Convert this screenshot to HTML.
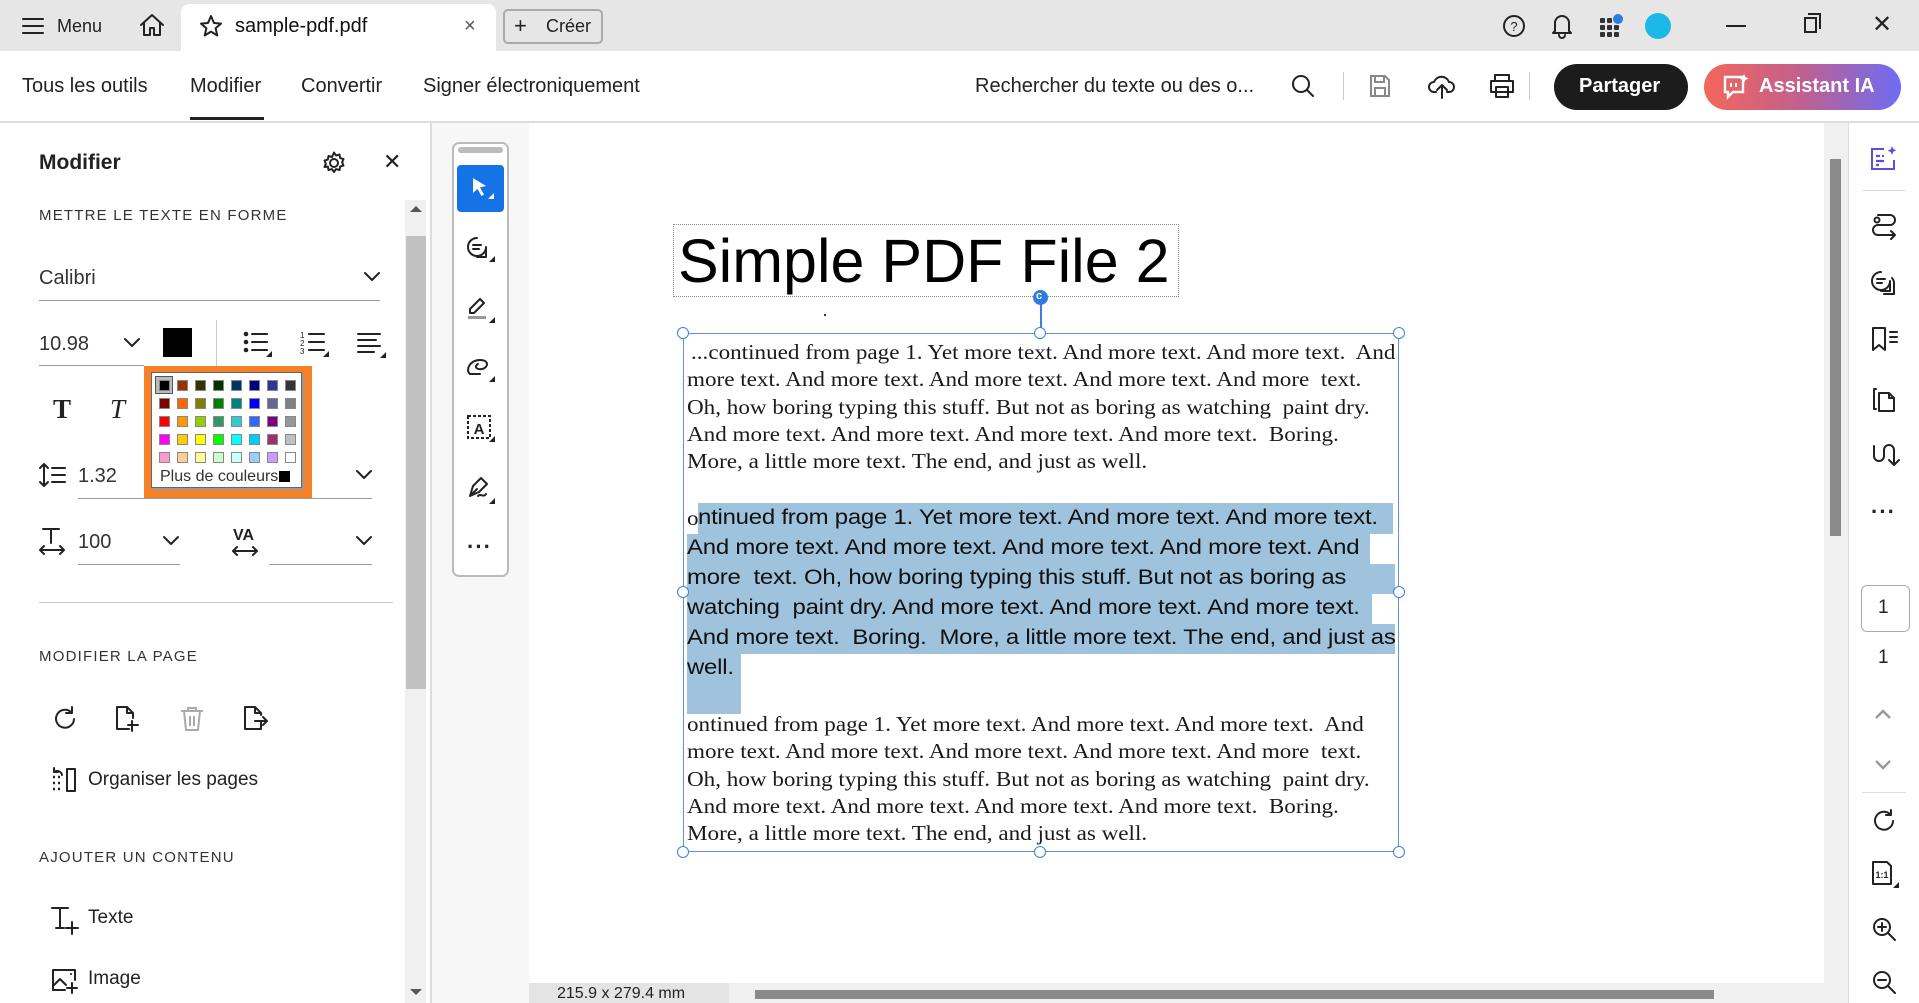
<!DOCTYPE html>
<html><head><meta charset="utf-8"><style>
*{margin:0;padding:0;box-sizing:border-box}
body{width:1919px;height:1003px;overflow:hidden;background:#fff;font-family:"Liberation Sans",sans-serif;color:#222;position:relative}
.a{position:absolute}
.t{position:absolute;white-space:nowrap;line-height:1}
svg{position:absolute;overflow:visible}
.ic{fill:none;stroke:#222;stroke-width:2;stroke-linecap:round;stroke-linejoin:round}
.ser{font-family:"Liberation Serif",serif;font-size:21px;color:#1a1a1a;transform:scaleX(1.1);transform-origin:0 0}
.san{font-family:"Liberation Sans",sans-serif;font-size:21px;color:#111;letter-spacing:-0.2px;transform:scaleX(1.14);transform-origin:0 0}
.hl{background:#9fc3dd}
.h{position:absolute;width:12px;height:12px;border:1.5px solid #3d7fd6;border-radius:50%;background:#fff}
.sw{position:absolute;width:11px;height:11px;border:1px solid #888}
.cap{font-size:15px;letter-spacing:1.2px;color:#333}
</style></head><body>

<!-- top bar -->
<div class="a" style="left:0;top:0;width:1919px;height:51px;background:#e6e6e6"></div>
<svg style="left:22px;top:17px" width="22" height="18"><path class="ic" d="M1 2h20M1 9h20M1 16h20"/></svg>
<div class="t" style="left:57px;top:17px;font-size:18px">Menu</div>
<svg style="left:139px;top:13px" width="26" height="24"><path class="ic" d="M2 12L13 2l11 10M5 10v12h6v-7h4v7h6V10"/></svg>
<div class="a" style="left:181px;top:4px;width:315px;height:47px;background:#fff;border-radius:8px 8px 0 0"></div>
<svg style="left:199px;top:14px" width="24" height="24"><path class="ic" d="M12 2l3 7 7 .6-5.4 4.6 1.7 7.3L12 17.6 5.7 21.5l1.7-7.3L2 9.6 9 9z"/></svg>
<div class="t" style="left:235px;top:16px;font-size:20px;color:#111">sample-pdf.pdf</div>
<div class="t" style="left:464px;top:16px;font-size:20px;color:#555">×</div>
<div class="a" style="left:503px;top:9px;width:100px;height:35px;border:2px solid #aaa;border-radius:5px"></div>
<div class="t" style="left:514px;top:15px;font-size:22px">+</div>
<div class="t" style="left:546px;top:17px;font-size:18px">Créer</div>
<svg style="left:1502px;top:14px" width="24" height="24"><circle class="ic" cx="12" cy="12" r="10"/><text x="12" y="17" font-size="13" text-anchor="middle" font-family="Liberation Sans" fill="#222">?</text></svg>
<svg style="left:1551px;top:13px" width="22" height="26"><path class="ic" d="M4 18V10a7 7 0 0114 0v8l2 2H2zM8 22a3 3 0 006 0"/></svg>
<svg style="left:1600px;top:14px" width="24" height="24"><g fill="#333"><rect x="0" y="4" width="5" height="5" rx="1"/><rect x="7" y="4" width="5" height="5" rx="1"/><rect x="0" y="11" width="5" height="5" rx="1"/><rect x="7" y="11" width="5" height="5" rx="1"/><rect x="14" y="11" width="5" height="5" rx="1"/><rect x="0" y="18" width="5" height="5" rx="1"/><rect x="7" y="18" width="5" height="5" rx="1"/><rect x="14" y="18" width="5" height="5" rx="1"/></g><circle cx="18" cy="5" r="5" fill="#2a7de1"/></svg>
<div class="a" style="left:1645px;top:13px;width:26px;height:26px;border-radius:50%;background:#1cb8e8"></div>
<div class="a" style="left:1726px;top:25px;width:20px;height:2px;background:#222"></div>
<div class="a" style="left:1804px;top:17px;width:13px;height:16px;border:2px solid #222"></div>
<div class="a" style="left:1808px;top:13px;width:13px;height:16px;border-top:2px solid #222;border-right:2px solid #222"></div>
<div class="t" style="left:1872px;top:13px;font-size:24px;color:#222">✕</div>

<!-- toolbar row -->
<div class="a" style="left:0;top:121px;width:1919px;height:2px;background:#ddd"></div>
<div class="t" style="left:22px;top:76px;font-size:20px">Tous les outils</div>
<div class="t" style="left:190px;top:76px;font-size:20px">Modifier</div>
<div class="a" style="left:190px;top:117px;width:74px;height:3px;background:#222"></div>
<div class="t" style="left:301px;top:76px;font-size:20px">Convertir</div>
<div class="t" style="left:423px;top:76px;font-size:20px">Signer électroniquement</div>
<div class="t" style="left:975px;top:76px;font-size:20px">Rechercher du texte ou des o...</div>
<svg style="left:1291px;top:74px" width="24" height="24"><circle class="ic" cx="10" cy="10" r="8"/><path class="ic" d="M16 16l6 6"/></svg>
<div class="a" style="left:1343px;top:72px;width:1px;height:28px;background:#ccc"></div>
<svg style="left:1369px;top:74px" width="22" height="24"><path d="M2 2h14l4 4v16H2z M6 2v6h9V2 M6 22v-8h10v8" fill="none" stroke="#888" stroke-width="2"/></svg>
<svg style="left:1428px;top:72px" width="28" height="28"><path class="ic" d="M8 20H6a5 5 0 010-10 8 8 0 0115 0 5 5 0 010 10h-2M14 26V13m-5 5l5-5 5 5"/></svg>
<svg style="left:1488px;top:73px" width="28" height="26"><path class="ic" d="M7 8V2h14v6M3 8h22v11H3zM8 14h12v10H8z"/></svg>
<div class="a" style="left:1529px;top:72px;width:1px;height:28px;background:#ccc"></div>
<div class="a" style="left:1554px;top:64px;width:134px;height:46px;border-radius:23px;background:#1c1c1c"></div>
<div class="t" style="left:1579px;top:76px;font-size:20px;font-weight:bold;color:#fff">Partager</div>
<div class="a" style="left:1704px;top:64px;width:197px;height:46px;border-radius:23px;background:linear-gradient(90deg,#f4675a,#c0608f 50%,#6d6cf4)"></div>
<svg style="left:1722px;top:73px" width="28" height="28"><path d="M3 4h18v15H11l-5 5v-5H3z" fill="none" stroke="#fff" stroke-width="2.4"/><path d="M9 10v4M14 10v4" stroke="#fff" stroke-width="2"/><path d="M22 1l1.5 3 3 1.5-3 1.5-1.5 3-1.5-3-3-1.5 3-1.5z" fill="#fff"/></svg>
<div class="t" style="left:1759px;top:76px;font-size:20px;font-weight:bold;color:#fff">Assistant IA</div>

<!-- left panel -->
<div class="a" style="left:430px;top:123px;width:2px;height:880px;background:#ddd"></div>
<div class="t" style="left:39px;top:152px;font-size:21px;font-weight:bold">Modifier</div>
<svg style="left:322px;top:151px" width="24" height="24"><circle class="ic" cx="12" cy="12" r="4"/><path class="ic" d="M12 1.5l2 3 3.5-1 .6 3.5 3.4 1.1-1.4 3.2 1.4 3.2-3.4 1.1-.6 3.5-3.5-1-2 3-2-3-3.5 1-.6-3.5L2.5 16l1.4-3.2L2.5 9.6l3.4-1.1.6-3.5 3.5 1z"/></svg>
<div class="t" style="left:383px;top:151px;font-size:22px">✕</div>
<div class="t cap" style="left:39px;top:208px">METTRE LE TEXTE EN FORME</div>
<div class="t" style="left:39px;top:268px;font-size:20px;color:#333">Calibri</div>
<svg style="left:364px;top:272px" width="16" height="10"><path class="ic" d="M1 1l7 7 7-7" stroke-width="2.4"/></svg>
<div class="a" style="left:39px;top:300px;width:341px;height:1px;background:#999"></div>
<div class="t" style="left:39px;top:334px;font-size:20px;color:#333">10.98</div>
<svg style="left:124px;top:338px" width="16" height="10"><path class="ic" d="M1 1l7 7 7-7" stroke-width="2.4"/></svg>
<div class="a" style="left:39px;top:365px;width:105px;height:1px;background:#999"></div>
<div class="a" style="left:163px;top:328px;width:29px;height:29px;background:#000"></div>
<div class="a" style="left:216px;top:320px;width:1px;height:48px;background:#ccc"></div>
<svg style="left:243px;top:331px" width="30" height="26"><g fill="#222"><circle cx="3" cy="3" r="2.3"/><circle cx="3" cy="11" r="2.3"/><circle cx="3" cy="19" r="2.3"/></g><path class="ic" d="M9 3h15M9 11h15M9 19h15"/><path d="M29 20v6h-6z" fill="#222"/></svg>
<svg style="left:300px;top:330px" width="30" height="27"><text x="0" y="8" font-size="8" font-family="Liberation Sans" fill="#222">1</text><text x="0" y="16" font-size="8" font-family="Liberation Sans" fill="#222">2</text><text x="0" y="24" font-size="8" font-family="Liberation Sans" fill="#222">3</text><path class="ic" d="M9 4h15M9 12h15M9 20h15"/><path d="M29 21v6h-6z" fill="#222"/></svg>
<svg style="left:357px;top:332px" width="30" height="26"><path class="ic" d="M1 2h22M1 8h18M1 14h22M1 20h16"/><path d="M29 20v6h-6z" fill="#222"/></svg>
<div class="t" style="left:53px;top:396px;font-size:27px;font-weight:bold;font-family:'Liberation Serif',serif">T</div>
<div class="t" style="left:110px;top:396px;font-size:27px;font-style:italic;font-family:'Liberation Serif',serif">T</div>
<svg style="left:39px;top:462px" width="28" height="26"><path class="ic" d="M5 2v22M1 6l4-4 4 4M1 20l4 4 4-4M13 6h13M13 13h13M13 20h13"/></svg>
<div class="t" style="left:78px;top:466px;font-size:20px;color:#333">1.32</div>
<svg style="left:356px;top:470px" width="16" height="10"><path class="ic" d="M1 1l7 7 7-7" stroke-width="2.4"/></svg>
<div class="a" style="left:78px;top:498px;width:294px;height:1px;background:#999"></div>
<svg style="left:39px;top:527px" width="26" height="28"><path class="ic" d="M4 2h16M12 2v14M7 2h10" stroke-width="2.6"/><path class="ic" d="M1 23h24M5 19l-4 4 4 4M21 19l4 4-4 4"/></svg>
<div class="t" style="left:78px;top:532px;font-size:20px;color:#333">100</div>
<svg style="left:163px;top:536px" width="16" height="10"><path class="ic" d="M1 1l7 7 7-7" stroke-width="2.4"/></svg>
<div class="a" style="left:78px;top:564px;width:102px;height:1px;background:#999"></div>
<div class="t" style="left:233px;top:528px;font-size:16px;font-weight:bold">VA</div>
<svg style="left:232px;top:545px" width="26" height="12"><path class="ic" d="M1 6h24M5 2L1 6l4 4M21 2l4 4-4 4"/></svg>
<svg style="left:356px;top:536px" width="16" height="10"><path class="ic" d="M1 1l7 7 7-7" stroke-width="2.4"/></svg>
<div class="a" style="left:269px;top:564px;width:103px;height:1px;background:#999"></div>

<!-- color popup -->
<div class="a" style="left:144px;top:366px;width:168px;height:132px;background:#f58025"></div>
<div class="a" style="left:151px;top:372px;width:151px;height:116px;background:#fff;border:1px solid #666;box-shadow:2px 2px 2px #999"></div>
<div class="a" style="left:155px;top:376px;width:18px;height:18px;border:1px solid #555;background:#bbb"></div>
<div id="grid"></div>
<div class="t" style="left:160px;top:469px;font-size:16px;color:#333">Plus de couleurs</div>
<div class="a" style="left:279px;top:471px;width:11px;height:11px;background:#000"></div>

<div class="a" style="left:39px;top:602px;width:354px;height:1px;background:#ccc"></div>
<div class="t cap" style="left:39px;top:649px">MODIFIER LA PAGE</div>
<svg style="left:52px;top:706px" width="26" height="26"><path class="ic" d="M22 13a9 9 0 11-3-7M20 1v6h-6"/></svg>
<svg style="left:115px;top:705px" width="28" height="28"><path class="ic" d="M14 24H2V2h10l6 6v5M12 2v6h6M17 16v10M13 20h10"/></svg>
<svg style="left:179px;top:706px" width="26" height="26"><path d="M2 5h22M9 5V2h8v3M5 5l2 19h12l2-19M11 10v10M15 10v10" fill="none" stroke="#aaa" stroke-width="2"/></svg>
<svg style="left:243px;top:705px" width="28" height="28"><path class="ic" d="M18 16v8H2V2h10l6 6v2M12 2v6h6M12 16h12M20 12l4 4-4 4"/></svg>
<svg style="left:51px;top:767px" width="26" height="26"><path class="ic" d="M16 2h8v22h-8z"/><path d="M2 10h2M7 10h2M2 16h2M7 16h2M2 22h2M7 22h2" stroke="#222" stroke-width="2.5"/><path class="ic" d="M11 8a5 5 0 00-8-3M3 1v4h4"/></svg>
<div class="t" style="left:88px;top:770px;font-size:19px;color:#222">Organiser les pages</div>
<div class="t cap" style="left:39px;top:850px">AJOUTER UN CONTENU</div>
<svg style="left:50px;top:906px" width="30" height="28"><path class="ic" d="M2 2h16M10 2v20M6 22h8"/><path class="ic" d="M22 16v12M16 22h12"/></svg>
<div class="t" style="left:88px;top:908px;font-size:19px;color:#222">Texte</div>
<svg style="left:51px;top:968px" width="28" height="26"><path class="ic" d="M14 22H2V2h22v10M2 18l7-7 6 6M20 6v.1"/><path class="ic" d="M21 15v10M16 20h10"/></svg>
<div class="t" style="left:88px;top:969px;font-size:19px;color:#222">Image</div>

<!-- left panel scrollbar -->
<div class="a" style="left:405px;top:200px;width:21px;height:803px;background:#f0f0f0"></div>
<div class="a" style="left:406px;top:236px;width:20px;height:453px;background:#c1c1c1"></div>
<div class="a" style="left:410px;top:206px;width:0;height:0;border-left:6px solid transparent;border-right:6px solid transparent;border-bottom:6px solid #555"></div>
<div class="a" style="left:410px;top:989px;width:0;height:0;border-left:6px solid transparent;border-right:6px solid transparent;border-top:6px solid #555"></div>

<!-- tools column -->
<div class="a" style="left:432px;top:123px;width:97px;height:880px;background:#f7f7f7"></div>
<div class="a" style="left:452px;top:142px;width:57px;height:435px;border:2px solid #bbb;border-radius:7px;background:#fff"></div>
<div class="a" style="left:458px;top:147px;width:45px;height:6px;border-radius:3px;background:#bbb"></div>
<div class="a" style="left:457px;top:165px;width:47px;height:47px;border-radius:4px;background:#1473e6"></div>
<svg style="left:472px;top:177px" width="24" height="24"><path d="M1 1l13 8-6 1.5 4 7-2.5 1.5-4-7L1 16z" fill="#fff"/><path d="M22 16v6h-6z" fill="#fff"/></svg>
<svg style="left:466px;top:236px" width="30" height="26"><path class="ic" d="M11 2a9 9 0 100 18 9 9 0 009-9v10h-9"/><path class="ic" d="M7 9h8M7 13h6"/><path d="M29 20v6h-6z" fill="#222"/></svg>
<svg style="left:466px;top:295px" width="30" height="28"><path class="ic" d="M14 4l4 4-10 10H4v-4z"/><path d="M2 21h18v3H2z" fill="#999"/><path d="M29 22v6h-6z" fill="#222"/></svg>
<svg style="left:466px;top:356px" width="30" height="26"><path class="ic" d="M4 18C-1 14 4 4 14 4s8 8 2 9-8-3-4-5M4 18h10"/><path d="M29 20v6h-6z" fill="#222"/></svg>
<svg style="left:466px;top:414px" width="30" height="28"><rect x="2" y="2" width="22" height="22" fill="none" stroke="#222" stroke-width="2" stroke-dasharray="3 2"/><text x="13" y="20" font-size="15" font-weight="bold" text-anchor="middle" font-family="Liberation Sans" fill="#222">A</text><path d="M29 22v6h-6z" fill="#222"/></svg>
<svg style="left:466px;top:476px" width="30" height="28"><path class="ic" d="M4 20l3-10 8-8 6 6-8 8zM4 20l7-7M12 20c3-3 5 2 8-2"/><path d="M29 22v6h-6z" fill="#222"/></svg>
<div class="t" style="left:467px;top:536px;font-size:22px;font-weight:bold;letter-spacing:1px">···</div>

<!-- document -->
<div class="a" style="left:673px;top:224px;width:506px;height:73px;border:1px dotted #888"></div>
<div class="t" style="left:678px;top:229px;font-size:61px;color:#000;line-height:1.05">Simple PDF File 2</div>
<div class="a" style="left:1040px;top:297px;width:2px;height:36px;background:#3d7fd6"></div>
<div class="a" style="left:1033px;top:290px;width:15px;height:15px;border-radius:50%;background:#2c7be0"></div>
<div class="t" style="left:1036px;top:291px;font-size:11px;font-weight:bold;color:#fff">c</div>
<div class="a" style="left:824px;top:314px;width:2px;height:2px;background:#333"></div>
<div class="a" style="left:683px;top:333px;width:716px;height:519px;border:1.5px solid #5c94dc"></div>

<div class="t ser" style="left:691px;top:342px">...continued from page 1. Yet more text. And more text. And more text.&nbsp; And</div>
<div class="t ser" style="left:687px;top:369px">more text. And more text. And more text. And more text. And more&nbsp; text.</div>
<div class="t ser" style="left:687px;top:397px">Oh, how boring typing this stuff. But not as boring as watching&nbsp; paint dry.</div>
<div class="t ser" style="left:687px;top:424px">And more text. And more text. And more text. And more text.&nbsp; Boring.</div>
<div class="t ser" style="left:687px;top:451px">More, a little more text. The end, and just as well.</div>

<div class="a hl" style="left:698px;top:503px;width:695px;height:31px"></div>
<div class="a hl" style="left:687px;top:534px;width:683px;height:30px"></div>
<div class="a hl" style="left:687px;top:564px;width:708px;height:30px"></div>
<div class="a hl" style="left:687px;top:594px;width:685px;height:30px"></div>
<div class="a hl" style="left:687px;top:624px;width:708px;height:30px"></div>
<div class="a hl" style="left:687px;top:654px;width:54px;height:60px"></div>
<div class="t ser" style="left:687px;top:508px">o</div>
<div class="t san" style="left:698px;top:507px">ntinued from page 1. Yet more text. And more text. And more text.</div>
<div class="t san" style="left:687px;top:537px">And more text. And more text. And more text. And more text. And</div>
<div class="t san" style="left:687px;top:567px">more&nbsp; text. Oh, how boring typing this stuff. But not as boring as</div>
<div class="t san" style="left:687px;top:597px">watching&nbsp; paint dry. And more text. And more text. And more text.</div>
<div class="t san" style="left:687px;top:627px">And more text.&nbsp; Boring.&nbsp; More, a little more text. The end, and just as</div>
<div class="t san" style="left:687px;top:657px">well.</div>

<div class="t ser" style="left:687px;top:714px">ontinued from page 1. Yet more text. And more text. And more text.&nbsp; And</div>
<div class="t ser" style="left:687px;top:741px">more text. And more text. And more text. And more text. And more&nbsp; text.</div>
<div class="t ser" style="left:687px;top:769px">Oh, how boring typing this stuff. But not as boring as watching&nbsp; paint dry.</div>
<div class="t ser" style="left:687px;top:796px">And more text. And more text. And more text. And more text.&nbsp; Boring.</div>
<div class="t ser" style="left:687px;top:823px">More, a little more text. The end, and just as well.</div>

<div class="h" style="left:677px;top:327px"></div>
<div class="h" style="left:1034px;top:327px"></div>
<div class="h" style="left:1393px;top:327px"></div>
<div class="h" style="left:677px;top:586px"></div>
<div class="h" style="left:1393px;top:586px"></div>
<div class="h" style="left:677px;top:846px"></div>
<div class="h" style="left:1034px;top:846px"></div>
<div class="h" style="left:1393px;top:846px"></div>

<!-- doc scrollbars -->
<div class="a" style="left:1824px;top:123px;width:24px;height:880px;background:#f0f0f0"></div>
<div class="a" style="left:1830px;top:159px;width:11px;height:377px;background:#8a8a8a"></div>
<div class="a" style="left:529px;top:983px;width:1295px;height:20px;background:#f0f0f0"></div>
<div class="a" style="left:529px;top:983px;width:200px;height:20px;background:#e4e4e4"></div>
<div class="t" style="left:557px;top:986px;font-size:16px;color:#222">215.9 x 279.4 mm</div>
<div class="a" style="left:755px;top:990px;width:959px;height:9px;background:#8a8a8a"></div>

<!-- right sidebar -->
<div class="a" style="left:1848px;top:123px;width:1px;height:880px;background:#ddd"></div>
<svg style="left:1870px;top:146px" width="28" height="26"><path d="M14 3H2v20h22v-9" fill="none" stroke="#5b4de0" stroke-width="2"/><path d="M6 10h4M12 10h2M6 15h8M6 19h3" stroke="#5b4de0" stroke-width="2.2"/><path d="M22 0l1.3 3 3 1.3-3 1.3L22 9l-1.3-3-3-1.3 3-1.3z" fill="#5b4de0"/></svg>
<div class="a" style="left:1862px;top:190px;width:44px;height:1px;background:#ddd"></div>
<svg style="left:1870px;top:212px" width="28" height="26"><path class="ic" d="M8 3h12a5 5 0 010 10H8a5 5 0 000 10h16M21 19l4 4-4 4"/><circle class="ic" cx="7" cy="8" r="2.5"/></svg>
<svg style="left:1870px;top:270px" width="28" height="26"><path class="ic" d="M11 2a9 9 0 100 18 9 9 0 009-9v10h-9"/><path class="ic" d="M7 9h8M7 13h5M22 8a8 8 0 012 5v11h-10"/></svg>
<svg style="left:1871px;top:326px" width="28" height="28"><path class="ic" d="M2 2h12v22l-6-5-6 5zM19 6h7M19 11h7M19 16h7"/></svg>
<svg style="left:1871px;top:385px" width="26" height="28"><path class="ic" d="M5 4H3v20h2M8 8h10l5 5v13H8zM18 8v5h5"/></svg>
<svg style="left:1871px;top:442px" width="26" height="28"><path class="ic" d="M3 4v10a5 5 0 0010 0V8a5 5 0 0110 0v14M18 18l5 5 5-5"/></svg>
<div class="t" style="left:1871px;top:501px;font-size:22px;font-weight:bold;letter-spacing:1px">···</div>
<div class="a" style="left:1861px;top:585px;width:49px;height:47px;border:1px solid #aaa;border-radius:6px"></div>
<div class="t" style="left:1878px;top:598px;font-size:19px;color:#222">1</div>
<div class="t" style="left:1878px;top:648px;font-size:19px;color:#222">1</div>
<svg style="left:1875px;top:709px" width="16" height="10"><path d="M1 9l7-7 7 7" fill="none" stroke="#999" stroke-width="2.4"/></svg>
<svg style="left:1875px;top:760px" width="16" height="10"><path d="M1 1l7 7 7-7" fill="none" stroke="#999" stroke-width="2.4"/></svg>
<div class="a" style="left:1862px;top:792px;width:44px;height:1px;background:#ddd"></div>
<svg style="left:1872px;top:809px" width="24" height="24"><path class="ic" d="M21 12a9 9 0 11-3-7M19 1v5h-5"/></svg>
<svg style="left:1871px;top:860px" width="28" height="28"><path class="ic" d="M2 2h14l4 4v18H2z"/><text x="11" y="18" font-size="9" font-weight="bold" text-anchor="middle" font-family="Liberation Sans" fill="#222">1:1</text><path d="M28 22v6h-6z" fill="#222"/></svg>
<svg style="left:1872px;top:917px" width="26" height="26"><circle class="ic" cx="10" cy="10" r="8"/><path class="ic" d="M16 16l7 7M6 10h8M10 6v8"/></svg>
<svg style="left:1872px;top:970px" width="26" height="26"><circle class="ic" cx="10" cy="10" r="8"/><path class="ic" d="M16 16l7 7M6 10h8"/></svg>

<script>
var c=[["#000","#993300","#333300","#003300","#003366","#000080","#333399","#333333"],
["#800000","#ff6600","#808000","#008000","#008080","#0000ff","#666699","#808080"],
["#ff0000","#ff9900","#99cc00","#339966","#33cccc","#3366ff","#800080","#969696"],
["#ff00ff","#ffcc00","#ffff00","#00ff00","#00ffff","#00ccff","#993366","#c0c0c0"],
["#ff99cc","#ffcc99","#ffff99","#ccffcc","#ccffff","#99ccff","#cc99ff","#ffffff"]];
var h="";
for(var r=0;r<5;r++)for(var k=0;k<8;k++){h+='<div class="sw" style="left:'+(159+k*18)+'px;top:'+(380+r*18)+'px;background:'+c[r][k]+'"></div>';}
document.getElementById("grid").innerHTML=h;
</script>
</body></html>
